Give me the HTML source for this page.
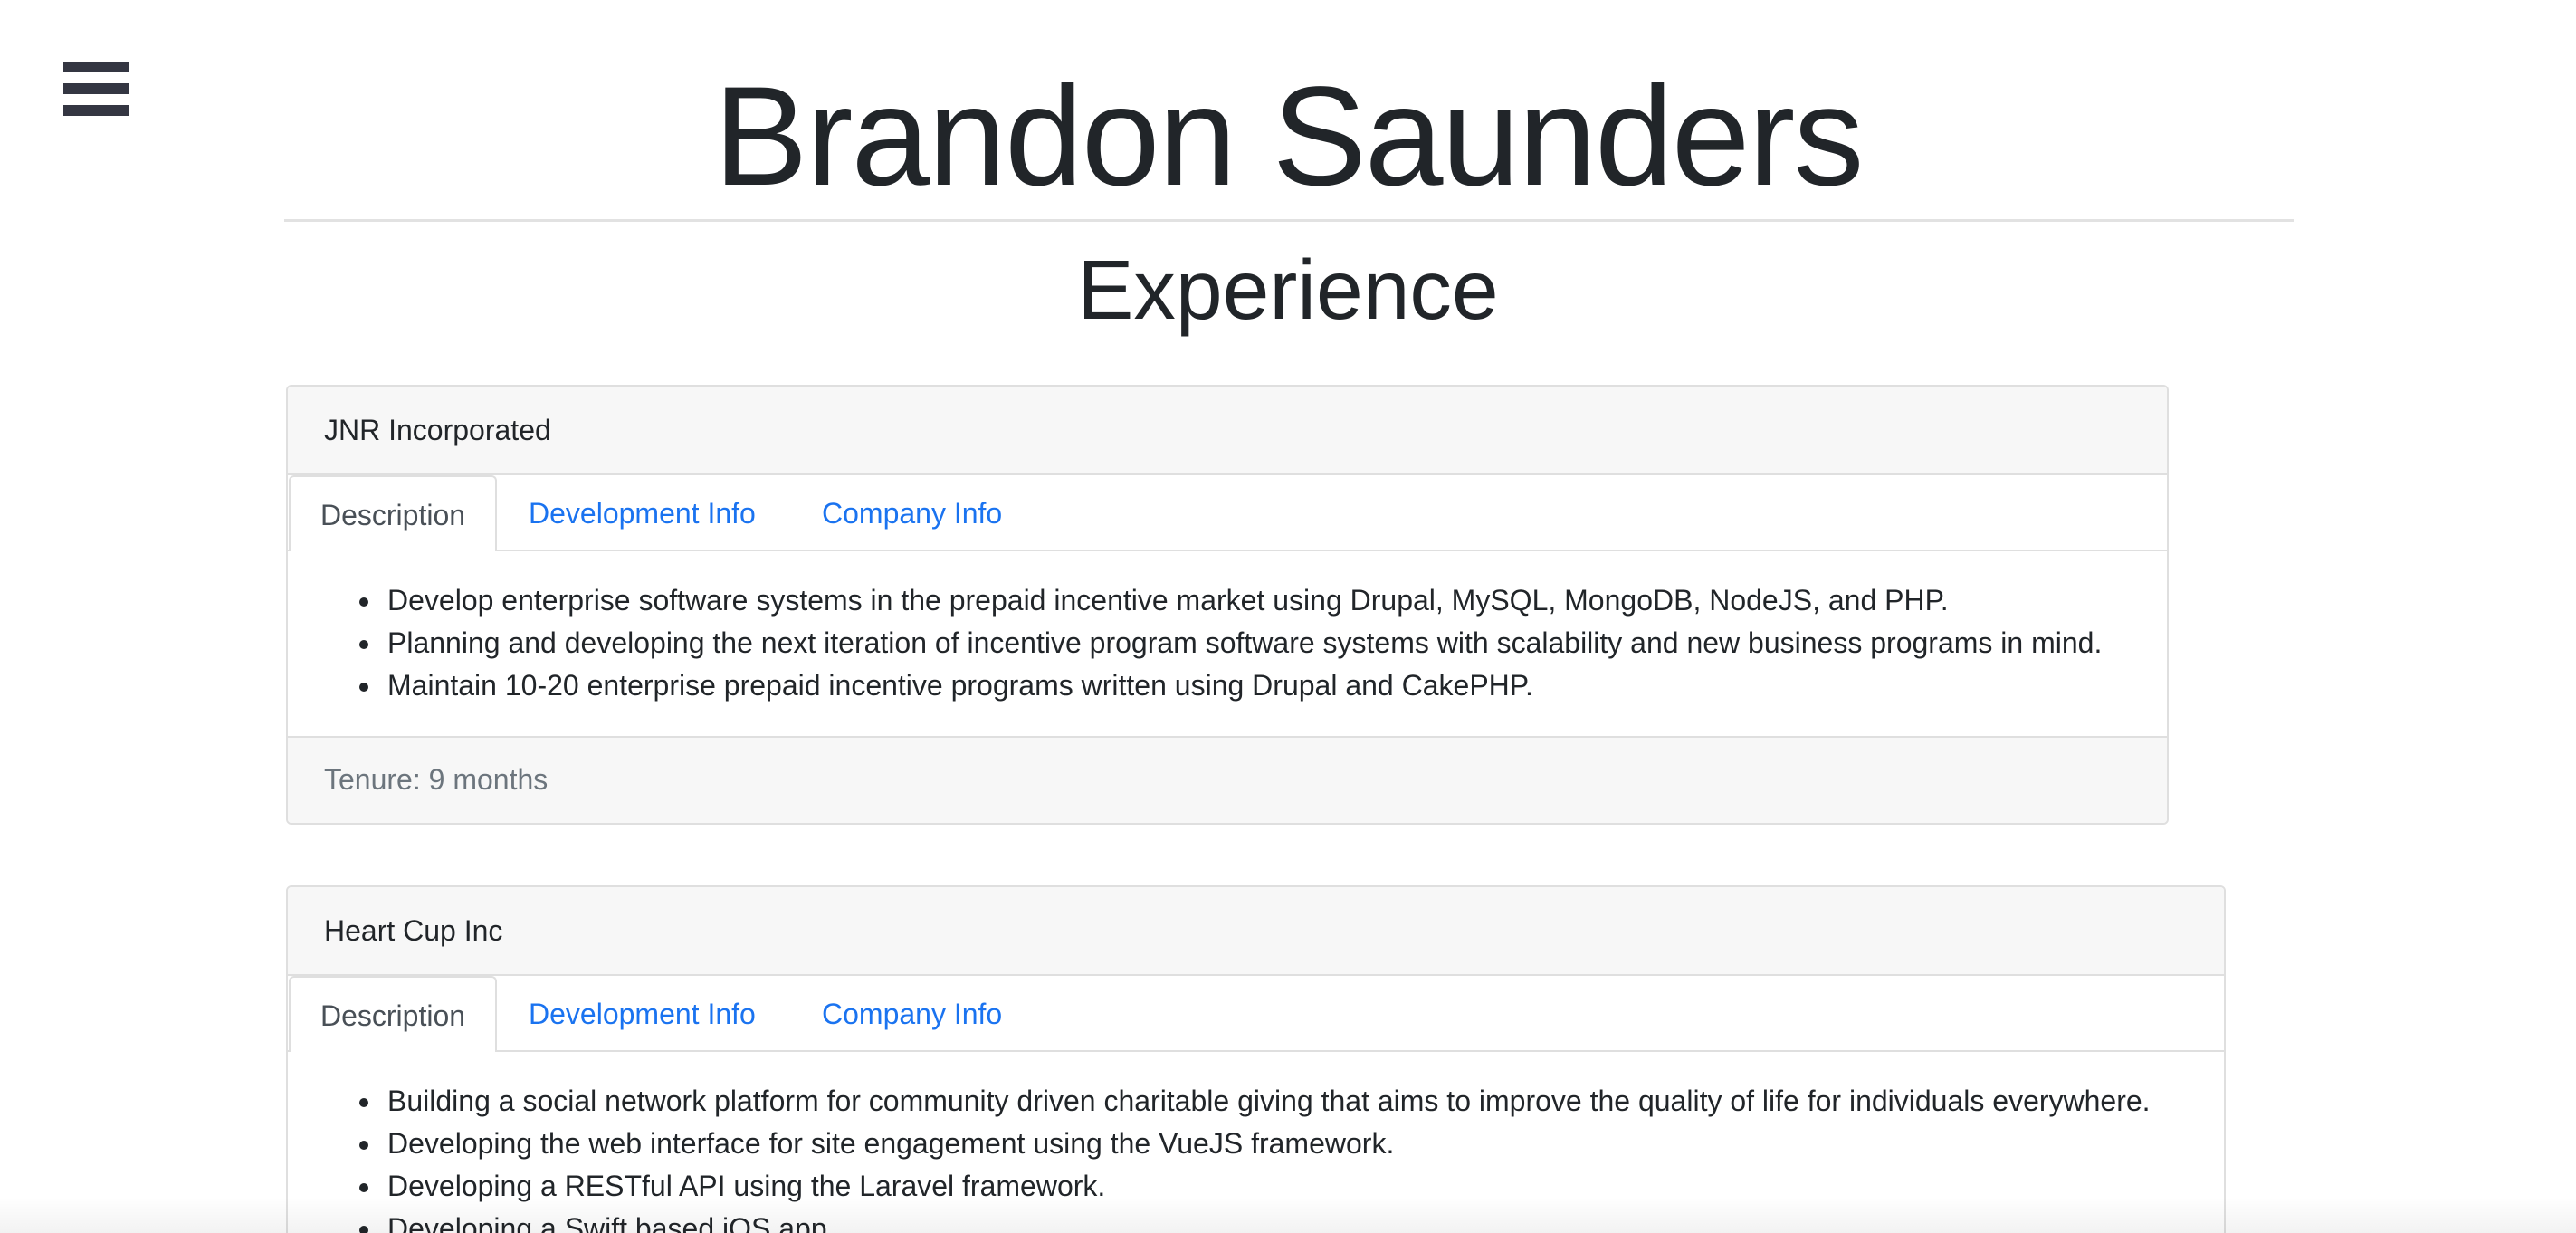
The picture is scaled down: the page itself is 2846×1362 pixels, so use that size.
<!DOCTYPE html>
<html><head><meta charset="utf-8"><style>
*{margin:0;padding:0;box-sizing:border-box}
html,body{width:2846px;height:1362px;overflow:hidden}
body{background:#fff;font-family:"Liberation Sans",sans-serif;color:#212529;position:relative}
.bar{position:absolute;left:70px;width:72px;height:12px;background:#343642}
h1{position:absolute;left:0;width:2846px;text-align:center;top:66px;font-size:156px;font-weight:400;line-height:170px;letter-spacing:-2px}
h2{position:absolute;left:0;width:2846px;text-align:center;top:268px;font-size:93px;font-weight:400;line-height:104px}
.hr{position:absolute;left:314px;width:2220px;top:242px;height:3px;background:#e2e2e2}
.card{position:absolute;border:2px solid #dfdfdf;border-radius:6px;overflow:hidden;background:#fff}
.hd{background:#f7f7f7;border-bottom:2px solid #dfdfdf;height:98px;padding-left:40px;font-size:32px;line-height:96px}
.tabs{height:84px;border-bottom:2px solid #dfdfdf;position:relative;font-size:32px}
.tab{position:absolute;top:0;line-height:84px}
.tab.act{left:1px;top:0;width:230px;height:84px;background:#fff;border:2px solid #dfdfdf;border-bottom:none;border-radius:6px 6px 0 0;color:#495057;text-align:center}
.link{color:#1a73f0}
ul{list-style:none;position:relative;font-size:32px}
li{position:absolute;left:110px;white-space:nowrap}
li:before{content:"";position:absolute;left:-31px;top:15px;width:10px;height:10px;border-radius:50%;background:#212529}
.ft{position:absolute;left:0;right:0;bottom:0;height:96px;background:#f7f7f7;border-top:2px solid #dfdfdf;padding-left:40px;font-size:32px;line-height:92px;color:#6c757d}
.shade{position:absolute;left:0;right:0;bottom:0;height:40px;background:linear-gradient(to bottom,rgba(0,0,0,0),rgba(0,0,0,0.05))}
</style></head><body>
<div class="bar" style="top:68px"></div>
<div class="bar" style="top:92px"></div>
<div class="bar" style="top:116px"></div>
<h1>Brandon Saunders</h1>
<div class="hr"></div>
<h2>Experience</h2>

<div class="card" style="left:316px;top:425px;width:2080px;height:486px">
 <div class="hd">JNR Incorporated</div>
 <div class="tabs">
  <div class="tab act">Description</div>
  <div class="tab link" style="left:266px">Development Info</div>
  <div class="tab link" style="left:590px">Company Info</div>
 </div>
 <ul>
  <li style="top:36px">Develop enterprise software systems in the prepaid incentive market using Drupal, MySQL, MongoDB, NodeJS, and PHP.</li>
  <li style="top:83px">Planning and developing the next iteration of incentive program software systems with scalability and new business programs in mind.</li>
  <li style="top:130px">Maintain 10-20 enterprise prepaid incentive programs written using Drupal and CakePHP.</li>
 </ul>
 <div class="ft">Tenure: 9 months</div>
</div>

<div class="card" style="left:316px;top:978px;width:2143px;height:420px">
 <div class="hd">Heart Cup Inc</div>
 <div class="tabs">
  <div class="tab act">Description</div>
  <div class="tab link" style="left:266px">Development Info</div>
  <div class="tab link" style="left:590px">Company Info</div>
 </div>
 <ul>
  <li style="top:36px">Building a social network platform for community driven charitable giving that aims to improve the quality of life for individuals everywhere.</li>
  <li style="top:83px">Developing the web interface for site engagement using the VueJS framework.</li>
  <li style="top:130px">Developing a RESTful API using the Laravel framework.</li>
  <li style="top:177px">Developing a Swift based iOS app.</li>
 </ul>
</div>
<div class="shade"></div>
</body></html>
